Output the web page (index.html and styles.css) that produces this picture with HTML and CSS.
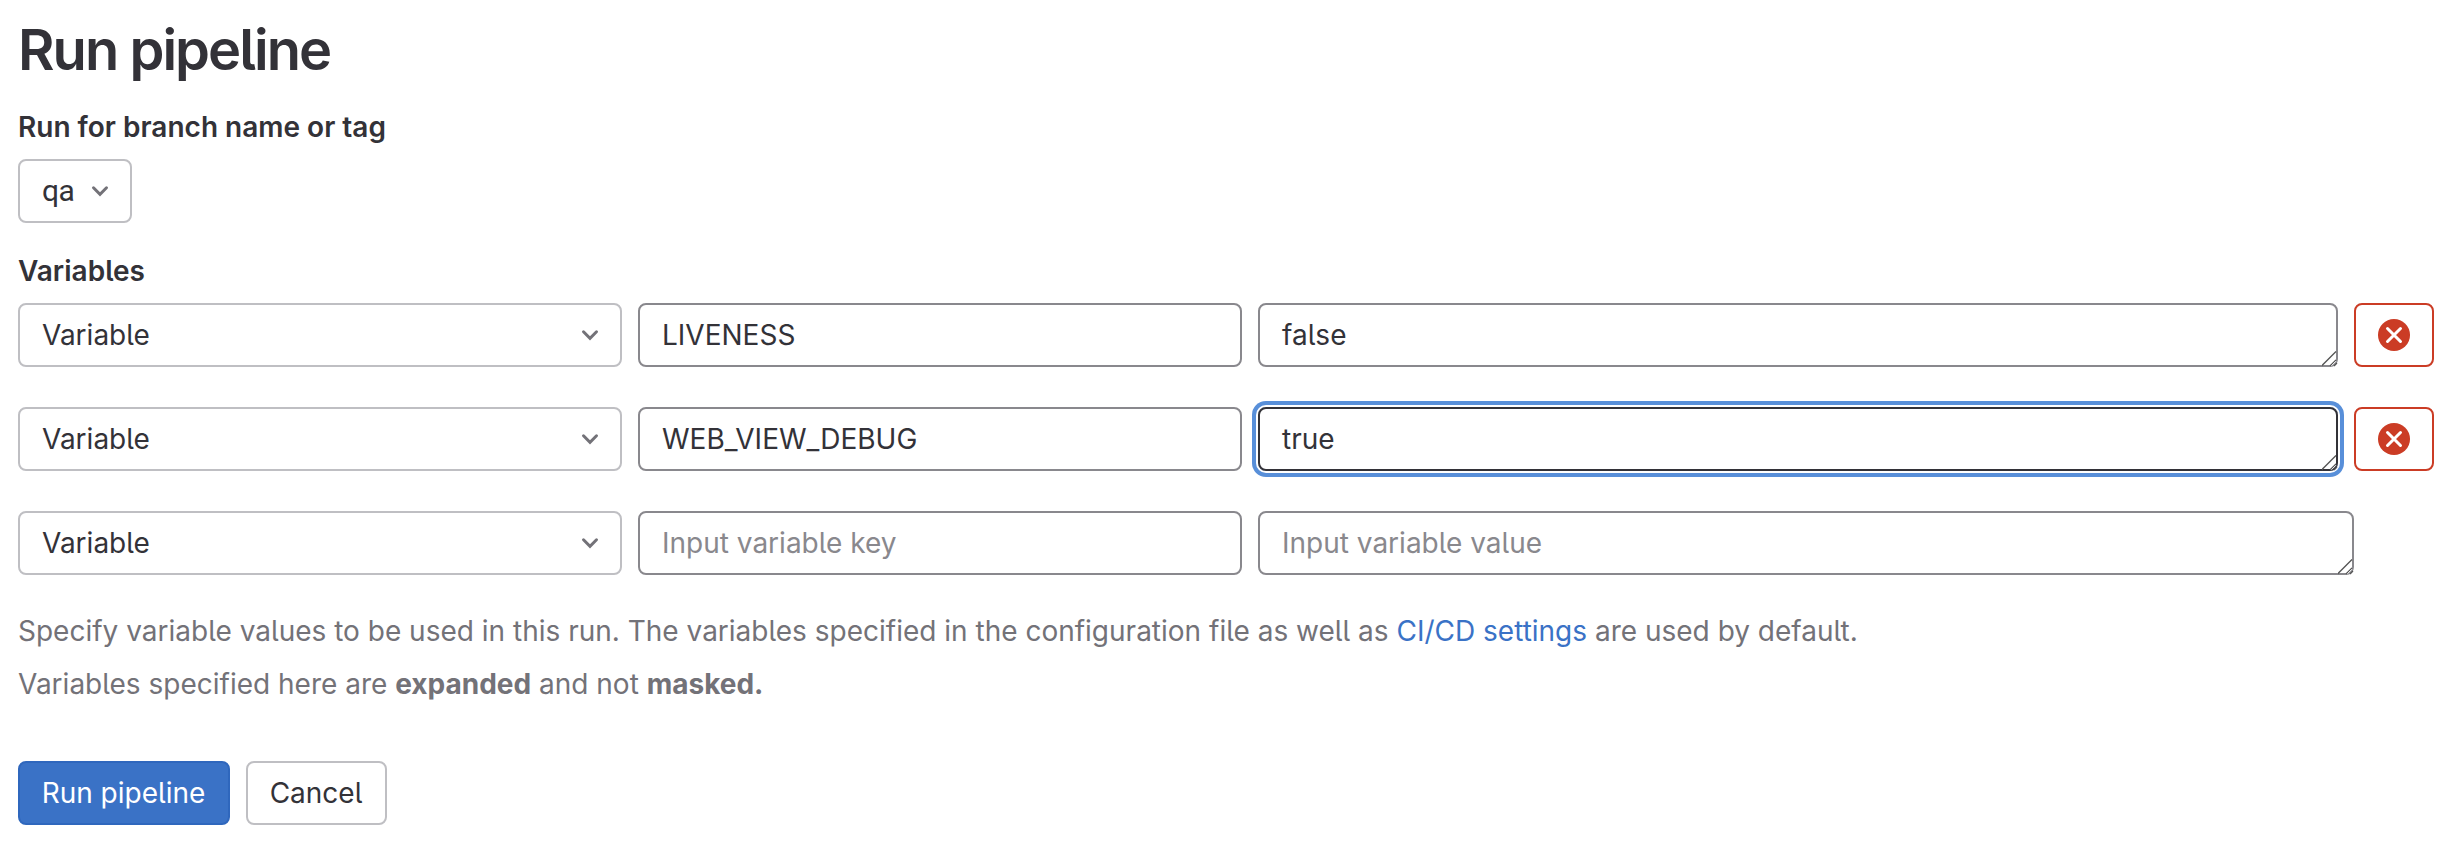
FILE: index.html
```html
<!DOCTYPE html>
<html lang="en">
<head>
<meta charset="utf-8">
<title>Run pipeline</title>
<link rel="stylesheet" href="styles.css">
</head>
<body>
<svg width="0" height="0" class="defs">
  <symbol id="chevron" viewBox="0 0 16 16"><path d="M4.75 6.4 8 9.65l3.25-3.25" fill="none" stroke="currentColor" stroke-width="1.5" stroke-linecap="round" stroke-linejoin="miter"/></symbol>
  <symbol id="grip" viewBox="0 0 16 16"><path d="M-.5 15 14 .5M8 15 14 9M12 15l3-3" fill="none" stroke="#555" stroke-width="1.300"/><path d="m9.500 14.700 4.500-4.500" fill="none" stroke="#fff" stroke-width="1"/></symbol>
  <symbol id="clear" viewBox="0 0 16 16"><circle cx="8" cy="8" r="8" fill="currentColor"/><path d="m4.750 4.750 6.500 6.500m0-6.500-6.500 6.500" fill="none" stroke="#fff" stroke-width="1.500" stroke-linecap="round"/></symbol>
</svg>
<main class="page">
  <h1 class="title">Run pipeline</h1>
  <form class="form">
    <div class="label">Run for branch name or tag</div>
    <div class="dropdown ref"><span class="mono">qa</span><svg class="chevron"><use href="#chevron"/></svg></div>
    <div class="label label-variables">Variables</div>
    <div class="rows">
      <div class="row">
        <div class="dropdown"><span>Variable</span><svg class="chevron"><use href="#chevron"/></svg></div>
        <div class="field"><span>LIVENESS</span></div>
        <div class="field value"><span>false</span><svg class="grip"><use href="#grip"/></svg></div>
        <button type="button" class="remove" aria-label="Remove variable"><svg class="clear"><use href="#clear"/></svg></button>
      </div>
      <div class="row">
        <div class="dropdown"><span>Variable</span><svg class="chevron"><use href="#chevron"/></svg></div>
        <div class="field"><span>WEB_VIEW_DEBUG</span></div>
        <div class="field value focused"><span>true</span><svg class="grip"><use href="#grip"/></svg></div>
        <button type="button" class="remove" aria-label="Remove variable"><svg class="clear"><use href="#clear"/></svg></button>
      </div>
      <div class="row row-empty">
        <div class="dropdown"><span>Variable</span><svg class="chevron"><use href="#chevron"/></svg></div>
        <div class="field placeholder"><span>Input variable key</span></div>
        <div class="field value placeholder"><span>Input variable value</span><svg class="grip"><use href="#grip"/></svg></div>
      </div>
    </div>
    <div class="help">
      <p>Specify variable values to be used in this run. The variables specified in the configuration file as well as <a class="link">CI/CD settings</a> are used by default.</p>
      <p>Variables specified here are <b>expanded</b> and not <b>masked.</b></p>
    </div>
    <div class="actions">
      <button type="button" class="button primary">Run pipeline</button>
      <button type="button" class="button">Cancel</button>
    </div>
  </form>
</main>
</body>
</html>
```
FILE: styles.css
```css
* { box-sizing: border-box; }
body {
  margin: 0;
  background: #fff;
  color: #333238;
  font: 400 28px/40px Inter, "Liberation Sans", sans-serif;
  font-feature-settings: "cv05";
}
.defs { display: block; }
.page { padding: 18px 20px 0 18px; }
.title { margin: 0; font-size: 56px; line-height: 64px; font-weight: 640; letter-spacing: -1.95px; }
.label { font-weight: 600; margin-top: 25px; }
.dropdown, .field {
  display: flex;
  align-items: center;
  justify-content: space-between;
  height: 64px;
  padding: 0 22px;
  border: 2px solid #bfbfc3;
  border-radius: 8px;
}
.field { border-color: #89888d; }
.chevron { width: 32px; height: 32px; margin-right: -8px; color: #737278; }
.ref { width: 114px; margin-top: 12px; }
.mono { font-family: Roboto, sans-serif; font-size: 30px; letter-spacing: -0.5px; }
.label-variables { margin-top: 28px; }
.rows { display: grid; gap: 40px; margin-top: 12px; }
.row { display: grid; grid-template-columns: 604px 604px 1fr 80px; column-gap: 16px; }
.row-empty { grid-template-columns: 604px 604px 1096px; }
.value { position: relative; }
.grip { position: absolute; right: -2px; bottom: -2px; width: 16px; height: 16px; }
.focused { border-color: #333238; box-shadow: 0 0 0 2px #fff, 0 0 0 6px #588fd9; }
.placeholder { color: #89888d; }
.remove {
  display: flex;
  align-items: center;
  justify-content: center;
  padding: 0;
  border: 2px solid #cb3c25;
  border-radius: 8px;
  background: #fff;
  color: #cb3c25;
}
.clear { width: 32px; height: 32px; }
.help { margin-top: 36px; color: #737278; }
.help p { margin: 0 0 13px; }
.help b { font-weight: 680; }
.link { color: #3a72c6; }
.actions { display: flex; gap: 16px; margin-top: 57px; }
.button {
  width: 141px;
  height: 64px;
  padding: 0 1px 0 0;
  border: 2px solid #bfbfc3;
  border-radius: 8px;
  background: #fff;
  color: #333238;
  font: inherit;
  font-feature-settings: inherit;
}
.primary { width: 212px; border-color: #2f67bd; background: #3a72c6; color: #fff; }
```
